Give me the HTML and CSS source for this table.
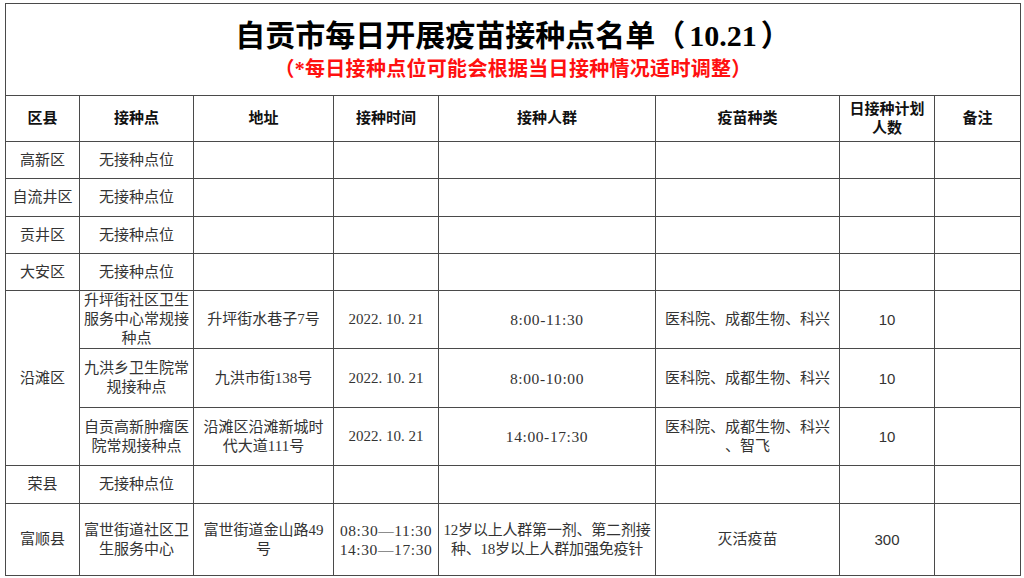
FILE: index.html
```html
<!DOCTYPE html>
<html lang="zh-CN">
<head>
<meta charset="utf-8">
<title>自贡市每日开展疫苗接种点名单</title>
<link rel="stylesheet" href="styles.css">
</head>
<body>
<table class="sheet">
  <colgroup>
    <col class="c1"><col class="c2"><col class="c3"><col class="c4"><col class="c5"><col class="c6"><col class="c7"><col class="c8">
  </colgroup>
  <tr class="r-title">
    <td colspan="8" class="title-cell">
      <div class="title">自贡市每日开展疫苗接种点名单（<span class="date">10.21</span>）</div>
      <div class="subtitle">（*每日接种点位可能会根据当日接种情况适时调整）</div>
    </td>
  </tr>
  <tr class="r-head">
    <th>区县</th><th>接种点</th><th>地址</th><th>接种时间</th><th>接种人群</th><th>疫苗种类</th><th>日接种计划<br>人数</th><th>备注</th>
  </tr>
  <tr class="r-s1"><td>高新区</td><td>无接种点位</td><td></td><td></td><td></td><td></td><td></td><td></td></tr>
  <tr class="r-s2"><td>自流井区</td><td>无接种点位</td><td></td><td></td><td></td><td></td><td></td><td></td></tr>
  <tr class="r-s1"><td>贡井区</td><td>无接种点位</td><td></td><td></td><td></td><td></td><td></td><td></td></tr>
  <tr class="r-s1"><td>大安区</td><td>无接种点位</td><td></td><td></td><td></td><td></td><td></td><td></td></tr>
  <tr class="r-m1">
    <td rowspan="3">沿滩区</td>
    <td>升坪街社区卫生<br>服务中心常规接<br>种点</td>
    <td>升坪街水巷子7号</td>
    <td>2022. 10. 21</td>
    <td class="time">8:00-11:30</td>
    <td>医科院、成都生物、科兴</td>
    <td class="num">10</td>
    <td></td>
  </tr>
  <tr class="r-m2">
    <td>九洪乡卫生院常<br>规接种点</td>
    <td>九洪市街138号</td>
    <td>2022. 10. 21</td>
    <td class="time">8:00-10:00</td>
    <td>医科院、成都生物、科兴</td>
    <td class="num">10</td>
    <td></td>
  </tr>
  <tr class="r-m1">
    <td>自贡高新肿瘤医<br>院常规接种点</td>
    <td>沿滩区沿滩新城时<br>代大道111号</td>
    <td>2022. 10. 21</td>
    <td class="time">14:00-17:30</td>
    <td>医科院、成都生物、科兴<br>、智飞</td>
    <td class="num">10</td>
    <td></td>
  </tr>
  <tr class="r-s2"><td>荣县</td><td>无接种点位</td><td></td><td></td><td></td><td></td><td></td><td></td></tr>
  <tr class="r-last">
    <td>富顺县</td>
    <td>富世街道社区卫<br>生服务中心</td>
    <td>富世街道金山路49<br>号</td>
    <td class="time">08:30—11:30<br>14:30—17:30</td>
    <td class="tight">12岁以上人群第一剂、第二剂接<br>种、18岁以上人群加强免疫针</td>
    <td>灭活疫苗</td>
    <td class="num">300</td>
    <td></td>
  </tr>
</table>
</body>
</html>
```
FILE: styles.css
```css
html, body {
  margin: 0;
  padding: 0;
  background: #ffffff;
}
body {
  padding: 3px 4px 0 5px;
  font-family: "Liberation Serif", "Noto Sans CJK SC", serif;
}
.sheet {
  border-collapse: collapse;
  table-layout: fixed;
  width: 1015px;
  color: #333333;
  font-size: 15px;
  line-height: 19px;
}
.c1 { width: 74px; }
.c2 { width: 114px; }
.c3 { width: 140px; }
.c4 { width: 105px; }
.c5 { width: 217px; }
.c6 { width: 184px; }
.c7 { width: 95px; }
.c8 { width: 86px; }
.sheet td, .sheet th {
  border: 1px solid #4a4a4a;
  padding: 0 3px;
  text-align: center;
  vertical-align: middle;
  overflow: hidden;
  white-space: nowrap;
}
.sheet th {
  color: #111111;
  font-weight: bold;
  font-size: 15px;
  line-height: 19px;
}
.r-title { height: 92px; }
.r-head { height: 46px; }
.r-s1 { height: 37px; }
.r-s2 { height: 38px; }
.r-m1 { height: 58px; }
.r-m2 { height: 59px; }
.r-last { height: 72px; }
.sheet td.title-cell {
  padding: 0;
}
.title {
  font-size: 30px;
  line-height: 36px;
  font-weight: bold;
  color: #000000;
  padding-top: 9px;
}
.date {
  margin: 0 4px;
}
.subtitle {
  font-size: 20px;
  line-height: 26px;
  font-weight: bold;
  color: #ff1010;
  letter-spacing: 0.3px;
  padding-top: 2px;
  padding-bottom: 9px;
}
.num {
  font-family: "Liberation Sans", "Noto Sans CJK SC", sans-serif;
}
.sheet td.time {
  letter-spacing: 0.6px;
  font-size: 15.5px;
}
.sheet td.tight {
  padding: 0 1px;
  letter-spacing: -0.2px;
}
```
